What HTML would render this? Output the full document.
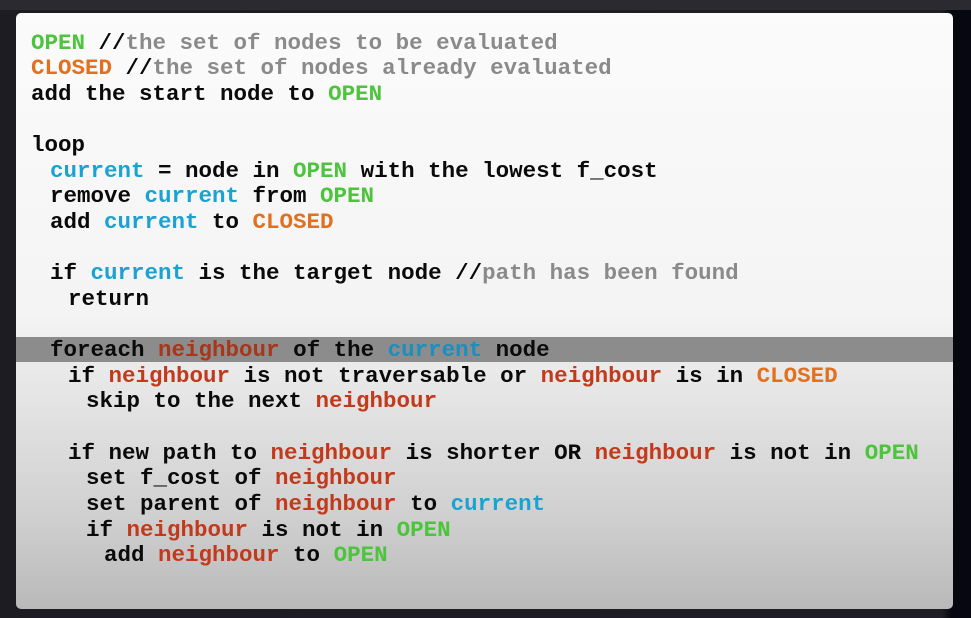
<!DOCTYPE html>
<html><head><meta charset="utf-8"><style>
html,body{margin:0;padding:0;}
body{width:971px;height:618px;overflow:hidden;background:linear-gradient(90deg,#1c1c22 0%,#1e1e24 97%,#070712 98%);position:relative;font-family:"Liberation Mono",monospace;}
.top{position:absolute;left:0;top:0;width:971px;height:10px;background:#2a2a30;}
.panel{position:absolute;left:16px;top:13px;width:937px;height:596px;border-radius:5px;background:linear-gradient(180deg,#fbfbfb 0%,#f4f4f4 50%,#cfcfcf 85%,#b9b9b9 100%);overflow:hidden;}
.hl{position:absolute;left:0;top:324px;width:937px;height:25px;background:#8c8c8c;}
.hl2 .r{color:#a8361a}.hl2 .b{color:#1a8fc0}
.code{position:absolute;left:15px;top:17.5px;font-size:22.5px;font-weight:bold;line-height:25.65px;color:#0a0a0a;}
.l{height:25.65px;white-space:pre;}
.g{color:#4cc43c}.o{color:#e2701f}.c{color:#8a8a8a}.b{color:#1aa3d2}.r{color:#c23a1c}
.i1{padding-left:19px}.i2{padding-left:37px}.i3{padding-left:55px}.i4{padding-left:73px}
</style></head><body>
<div class="top"></div>
<div class="panel">
<div class="hl"></div>
<div class="code">
<div class="l"><span class="g">OPEN</span> //<span class="c">the set of nodes to be evaluated</span></div>
<div class="l"><span class="o">CLOSED</span> //<span class="c">the set of nodes already evaluated</span></div>
<div class="l">add the start node to <span class="g">OPEN</span></div>
<div class="l"></div>
<div class="l">loop</div>
<div class="l i1"><span class="b">current</span> = node in <span class="g">OPEN</span> with the lowest f_cost</div>
<div class="l i1">remove <span class="b">current</span> from <span class="g">OPEN</span></div>
<div class="l i1">add <span class="b">current</span> to <span class="o">CLOSED</span></div>
<div class="l"></div>
<div class="l i1">if <span class="b">current</span> is the target node //<span class="c">path has been found</span></div>
<div class="l i2">return</div>
<div class="l"></div>
<div class="l i1 hl2">foreach <span class="r">neighbour</span> of the <span class="b">current</span> node</div>
<div class="l i2">if <span class="r">neighbour</span> is not traversable or <span class="r">neighbour</span> is in <span class="o">CLOSED</span></div>
<div class="l i3">skip to the next <span class="r">neighbour</span></div>
<div class="l"></div>
<div class="l i2">if new path to <span class="r">neighbour</span> is shorter OR <span class="r">neighbour</span> is not in <span class="g">OPEN</span></div>
<div class="l i3">set f_cost of <span class="r">neighbour</span></div>
<div class="l i3">set parent of <span class="r">neighbour</span> to <span class="b">current</span></div>
<div class="l i3">if <span class="r">neighbour</span> is not in <span class="g">OPEN</span></div>
<div class="l i4">add <span class="r">neighbour</span> to <span class="g">OPEN</span></div>
</div>
</div>
</body></html>
